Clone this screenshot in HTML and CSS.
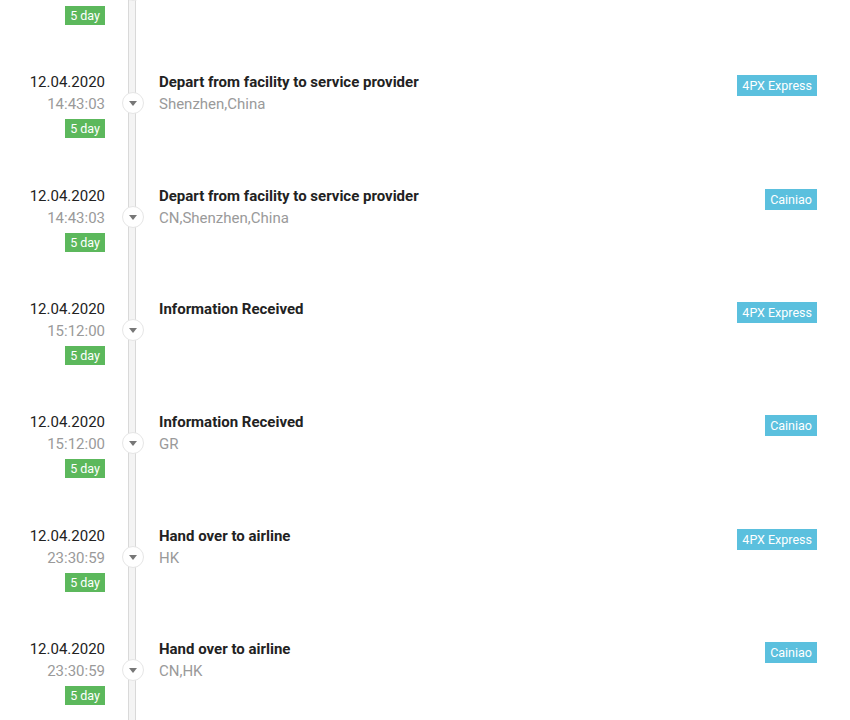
FILE: index.html
```html
<!DOCTYPE html>
<html lang="en">
<head>
    <meta charset="UTF-8">
    <title>Tracking history</title>
    <link rel="stylesheet" href="styles.css">
</head>
<body>
    <ul class="timeline">
        <li class="event">
            <div class="when">
                <div class="date">12.04.2020</div>
                <div class="time">14:43:03</div>
                <span class="days">5 day</span>
            </div>
            <div class="rail"><span class="dot"></span></div>
            <div class="what">
                <div class="status">Arrived at facility</div>
                <div class="place">Shenzhen,China</div>
            </div>
            <div class="source"><span class="carrier">Cainiao</span></div>
        </li>
        <li class="event">
            <div class="when">
                <div class="date">12.04.2020</div>
                <div class="time">14:43:03</div>
                <span class="days">5 day</span>
            </div>
            <div class="rail"><span class="dot"></span></div>
            <div class="what">
                <div class="status">Depart from facility to service provider</div>
                <div class="place">Shenzhen,China</div>
            </div>
            <div class="source"><span class="carrier">4PX Express</span></div>
        </li>
        <li class="event">
            <div class="when">
                <div class="date">12.04.2020</div>
                <div class="time">14:43:03</div>
                <span class="days">5 day</span>
            </div>
            <div class="rail"><span class="dot"></span></div>
            <div class="what">
                <div class="status">Depart from facility to service provider</div>
                <div class="place">CN,Shenzhen,China</div>
            </div>
            <div class="source"><span class="carrier">Cainiao</span></div>
        </li>
        <li class="event">
            <div class="when">
                <div class="date">12.04.2020</div>
                <div class="time">15:12:00</div>
                <span class="days">5 day</span>
            </div>
            <div class="rail"><span class="dot"></span></div>
            <div class="what">
                <div class="status">Information Received</div>
                <div class="place"></div>
            </div>
            <div class="source"><span class="carrier">4PX Express</span></div>
        </li>
        <li class="event">
            <div class="when">
                <div class="date">12.04.2020</div>
                <div class="time">15:12:00</div>
                <span class="days">5 day</span>
            </div>
            <div class="rail"><span class="dot"></span></div>
            <div class="what">
                <div class="status">Information Received</div>
                <div class="place">GR</div>
            </div>
            <div class="source"><span class="carrier">Cainiao</span></div>
        </li>
        <li class="event">
            <div class="when">
                <div class="date">12.04.2020</div>
                <div class="time">23:30:59</div>
                <span class="days">5 day</span>
            </div>
            <div class="rail"><span class="dot"></span></div>
            <div class="what">
                <div class="status">Hand over to airline</div>
                <div class="place">HK</div>
            </div>
            <div class="source"><span class="carrier">4PX Express</span></div>
        </li>
        <li class="event">
            <div class="when">
                <div class="date">12.04.2020</div>
                <div class="time">23:30:59</div>
                <span class="days">5 day</span>
            </div>
            <div class="rail"><span class="dot"></span></div>
            <div class="what">
                <div class="status">Hand over to airline</div>
                <div class="place">CN,HK</div>
            </div>
            <div class="source"><span class="carrier">Cainiao</span></div>
        </li>
    </ul>
</body>
</html>
```

FILE: styles.css
```css
* {
    margin: 0;
    padding: 0;
    box-sizing: border-box;
    font-family: 'Roboto', 'Liberation Sans', sans-serif;
}

body {
    background-color: #fff;
    color: #222;
    overflow: hidden;
}

.timeline {
    list-style: none;
    margin-top: -42px; /* list is scrolled, first row cut off */
    padding-right: 33px;
}

.event {
    display: flex;
    height: 113.33px;
}

.when {
    width: 105px;
    display: flex;
    flex-direction: column;
    align-items: flex-end;
    font-size: 15px;
    line-height: 22px;
}

.date {
    color: #222;
}

.time {
    color: #9a9a9a;
}

.days {
    margin-top: 4px;
    padding: 0 5px;
    height: 19px;
    line-height: 19px;
    font-size: 12.5px;
    color: #fff;
    background-color: #5cb85c;
}

/* the vertical track: 1px borders with a pale fill */
.rail {
    width: 54px;
    flex-shrink: 0;
    background: linear-gradient(to right,
        transparent 23px, #d9d9d9 23px, #d9d9d9 24px,
        #f4f4f4 24px, #f4f4f4 30px,
        #d9d9d9 30px, #d9d9d9 31px, transparent 31px);
}

.dot {
    display: block;
    width: 22px;
    height: 22px;
    margin: 21px auto 0;
    border: 1px solid #e6e6e6;
    border-radius: 50%;
    background-color: #fff;
    position: relative;
    left: 1px;
}

.dot::after {
    content: '';
    position: absolute;
    left: 6px;
    top: 8px;
    border-left: 4px solid transparent;
    border-right: 4px solid transparent;
    border-top: 5px solid #777;
}

.what {
    flex: 1;
    font-size: 15px;
    line-height: 22px;
}

.status {
    font-weight: 700;
    color: #222;
}

.place {
    color: #9a9a9a;
}

.source {
    padding-top: 4px;
}

.carrier {
    display: inline-block;
    padding: 3px 5px;
    line-height: 15px;
    font-size: 12.5px;
    color: #fff;
    background-color: #5bc0de;
}
```
